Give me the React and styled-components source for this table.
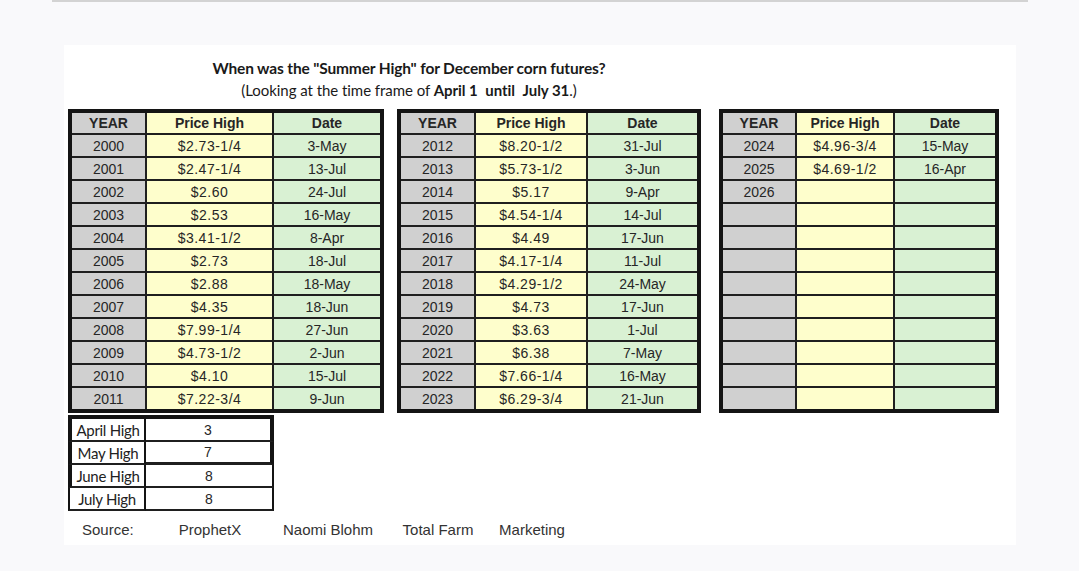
import React from 'react'
import styled, { createGlobalStyle } from 'styled-components'

const GlobalStyle = createGlobalStyle`
  html, body {
    margin: 0;
    padding: 0;
    background: #f9f9fb;
  }
  body {
    font-family: "Liberation Sans", Arial, sans-serif;
    color: #262626;
  }
`

// data straight off the sheet
const early = [
  ['2000', '$2.73-1/4', '3-May'],
  ['2001', '$2.47-1/4', '13-Jul'],
  ['2002', '$2.60', '24-Jul'],
  ['2003', '$2.53', '16-May'],
  ['2004', '$3.41-1/2', '8-Apr'],
  ['2005', '$2.73', '18-Jul'],
  ['2006', '$2.88', '18-May'],
  ['2007', '$4.35', '18-Jun'],
  ['2008', '$7.99-1/4', '27-Jun'],
  ['2009', '$4.73-1/2', '2-Jun'],
  ['2010', '$4.10', '15-Jul'],
  ['2011', '$7.22-3/4', '9-Jun'],
]

const middle = [
  ['2012', '$8.20-1/2', '31-Jul'],
  ['2013', '$5.73-1/2', '3-Jun'],
  ['2014', '$5.17', '9-Apr'],
  ['2015', '$4.54-1/4', '14-Jul'],
  ['2016', '$4.49', '17-Jun'],
  ['2017', '$4.17-1/4', '11-Jul'],
  ['2018', '$4.29-1/2', '24-May'],
  ['2019', '$4.73', '17-Jun'],
  ['2020', '$3.63', '1-Jul'],
  ['2021', '$6.38', '7-May'],
  ['2022', '$7.66-1/4', '16-May'],
  ['2023', '$6.29-3/4', '21-Jun'],
]

const recent = [
  ['2024', '$4.96-3/4', '15-May'],
  ['2025', '$4.69-1/2', '16-Apr'],
  ['2026', '', ''],
  ...Array.from({ length: 9 }, () => ['', '', '']),
]

const monthCounts = [
  { label: 'April High', count: 3, left: 4, right: 4, bottom: 2, valueBottom: 2 },
  { label: 'May High', count: 7, left: 4, right: 4, bottom: 2, valueBottom: 3 },
  { label: 'June High', count: 8, left: 4, right: 2, bottom: 2, valueBottom: 2 },
  { label: 'July High', count: 8, left: 2, right: 2, bottom: 2, valueBottom: 2 },
]

const sources = ['Source:', 'ProphetX', 'Naomi Blohm', 'Total Farm', 'Marketing']

const Page = styled.div`
  min-height: 571px;
  overflow: hidden;
`

const TopRule = styled.div`
  margin: 0 51px 0 52px;
  height: 2px;
  background: #d3d3d3;
`

const Card = styled.div`
  box-sizing: border-box;
  margin: 43px 0 0 64px;
  width: 952px;
  height: 500px;
  padding: 12px 0 0 4px;
  background: #fff;
`

const Heading = styled.div`
  width: 682px;
  text-align: center;
  font-family: Lato, "Liberation Sans", sans-serif;
  color: #1a1a1a;
`

const Title = styled.div`
  font-size: 15.5px;
  font-weight: 700;
  line-height: 22px;
  letter-spacing: -0.15px;
`

const Subtitle = styled.div`
  font-size: 15px;
  line-height: 22px;
  letter-spacing: -0.05px;

  b {
    font-weight: 700;
  }
`

const TablesRow = styled.div`
  display: flex;
  align-items: flex-start;
  margin-top: 8px;
`

const Sheet = styled.div`
  display: grid;
  grid-template-columns: ${(p) => p.$cols};
  grid-template-rows: 20px repeat(12, 21px);
  gap: 2px;
  margin-left: ${(p) => p.$ml || 0}px;
  border: 4px solid #141414;
  background: #1f1f1f;
`

const tint = {
  year: '#d0d0d0',
  price: '#fefecc',
  date: '#d9f1d3',
}

const Cell = styled.div`
  display: flex;
  align-items: center;
  justify-content: center;
  background: ${(p) => tint[p.$kind]};
  font-size: 14px;
  line-height: 1;
  letter-spacing: ${(p) => (p.$kind === 'price' && !p.$head ? 0.5 : 0)}px;
  font-weight: ${(p) => (p.$head ? 700 : 400)};
  color: #262626;
  white-space: nowrap;
`

const Summary = styled.div`
  width: 206px;
  margin-top: 2px;
  border-top: 4px solid #141414;
`

const SumRow = styled.div`
  display: grid;
  grid-template-columns: 78px 128px;
  height: 23px;
`

const SumLabel = styled.div`
  box-sizing: border-box;
  display: flex;
  align-items: center;
  justify-content: center;
  border-left: ${(p) => p.$left}px solid #141414;
  border-right: 2px solid #141414;
  border-bottom: ${(p) => p.$bottom}px solid #1f1f1f;
  font-family: Lato, "Liberation Sans", sans-serif;
  font-size: 15px;
  letter-spacing: -0.3px;
  color: #222;
  white-space: nowrap;
`

const SumValue = styled.div`
  box-sizing: border-box;
  display: flex;
  align-items: center;
  justify-content: center;
  border-right: ${(p) => p.$right}px solid #141414;
  border-bottom: ${(p) => p.$bottom}px solid #1f1f1f;
  font-size: 14px;
  color: #262626;
`

const SourceRow = styled.div`
  display: grid;
  grid-template-columns: 78px 128px 108px 112px 76px;
  margin-top: 9px;
  font-size: 15px;
  line-height: 20px;
  color: #333;
`

const SourceText = styled.div`
  text-align: ${(p) => (p.$first ? 'left' : 'center')};
  padding-left: ${(p) => (p.$first ? 14 : 0)}px;
  white-space: nowrap;
`

const YearTable = ({ rows, cols, ml }) => (
  <Sheet $cols={cols} $ml={ml}>
    <Cell $kind="year" $head>YEAR</Cell>
    <Cell $kind="price" $head>Price High</Cell>
    <Cell $kind="date" $head>Date</Cell>
    {rows.map(([year, price, date], i) => (
      <React.Fragment key={i}>
        <Cell $kind="year">{year}</Cell>
        <Cell $kind="price">{price}</Cell>
        <Cell $kind="date">{date}</Cell>
      </React.Fragment>
    ))}
  </Sheet>
)

const App = () => {
  return (
    <Page>
      <GlobalStyle />
      <TopRule />
      <Card>
        <Heading>
          <Title>When was the "Summer High" for December corn futures?</Title>
          <Subtitle>
            (Looking at the time frame of <b>April 1</b>&nbsp; <b>until</b>&nbsp; <b>July 31</b>.)
          </Subtitle>
        </Heading>

        <TablesRow>
          <YearTable rows={early} cols="73px 125px 106px" />
          <YearTable rows={middle} cols="73px 110px 109px" ml={13} />
          <YearTable rows={recent} cols="72px 96px 100px" ml={18} />
        </TablesRow>

        <Summary>
          {monthCounts.map((m) => (
            <SumRow key={m.label}>
              <SumLabel $left={m.left} $bottom={m.bottom}>{m.label}</SumLabel>
              <SumValue $right={m.right} $bottom={m.valueBottom}>{m.count}</SumValue>
            </SumRow>
          ))}
        </Summary>

        <SourceRow>
          {sources.map((s, i) => (
            <SourceText key={s} $first={i === 0}>{s}</SourceText>
          ))}
        </SourceRow>
      </Card>
    </Page>
  )
}

export default App
